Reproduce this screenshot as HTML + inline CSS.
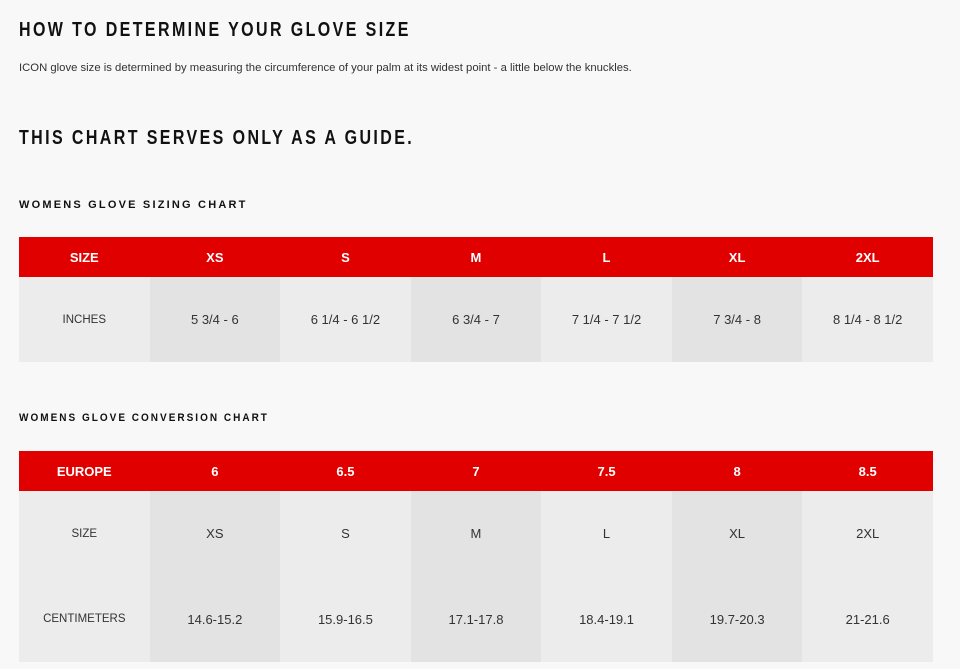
<!DOCTYPE html>
<html><head><style>
body{margin:0;width:960px;height:669px;background:#f8f8f8;font-family:"Liberation Sans",sans-serif;position:relative;overflow:hidden;color:#111}
.a{position:absolute;white-space:nowrap}
h1{position:absolute;margin:0;font-size:20px;font-weight:bold;letter-spacing:3px;left:19px;line-height:20px;transform:scaleX(0.8);transform-origin:0 0;white-space:nowrap}
h3{position:absolute;margin:0;font-size:11px;font-weight:bold;letter-spacing:2.2px;left:19px;line-height:12px;transform-origin:0 0;white-space:nowrap}
table{position:absolute;left:19px;width:914px;border-collapse:collapse;table-layout:fixed}
td{text-align:center;font-size:13px;color:#333;padding:0}
tr.h td{background:#e00000;color:#fff;font-weight:bold;height:40px;font-size:13px}
td.c0{background:#ececec;font-size:11.5px}
td.c1{background:#e3e3e3}
td.c2{background:#ececec}
</style></head><body>
<h1 style="top:20px">HOW TO DETERMINE YOUR GLOVE SIZE</h1>
<div class="a" style="left:19px;top:62px;font-size:11.3px;color:#333">ICON glove size is determined by measuring the circumference of your palm at its widest point - a little below the knuckles.</div>
<h1 style="top:128px;transform:scaleX(0.8)">THIS CHART SERVES ONLY AS A GUIDE.</h1>
<h3 style="top:199px">WOMENS GLOVE SIZING CHART</h3>
<table style="top:237px">
<tr class="h"><td>SIZE</td><td>XS</td><td>S</td><td>M</td><td>L</td><td>XL</td><td>2XL</td></tr>
<tr style="height:85px"><td class="c0">INCHES</td><td class="c1">5 3/4 - 6</td><td class="c2">6 1/4 - 6 1/2</td><td class="c1">6 3/4 - 7</td><td class="c2">7 1/4 - 7 1/2</td><td class="c1">7 3/4 - 8</td><td class="c2">8 1/4 - 8 1/2</td></tr>
</table>
<h3 style="top:412px;transform:scaleX(0.91)">WOMENS GLOVE CONVERSION CHART</h3>
<table style="top:451px">
<tr class="h"><td>EUROPE</td><td>6</td><td>6.5</td><td>7</td><td>7.5</td><td>8</td><td>8.5</td></tr>
<tr style="height:85px"><td class="c0">SIZE</td><td class="c1">XS</td><td class="c2">S</td><td class="c1">M</td><td class="c2">L</td><td class="c1">XL</td><td class="c2">2XL</td></tr>
<tr style="height:86px"><td class="c0">CENTIMETERS</td><td class="c1">14.6-15.2</td><td class="c2">15.9-16.5</td><td class="c1">17.1-17.8</td><td class="c2">18.4-19.1</td><td class="c1">19.7-20.3</td><td class="c2">21-21.6</td></tr>
</table>
</body></html>
